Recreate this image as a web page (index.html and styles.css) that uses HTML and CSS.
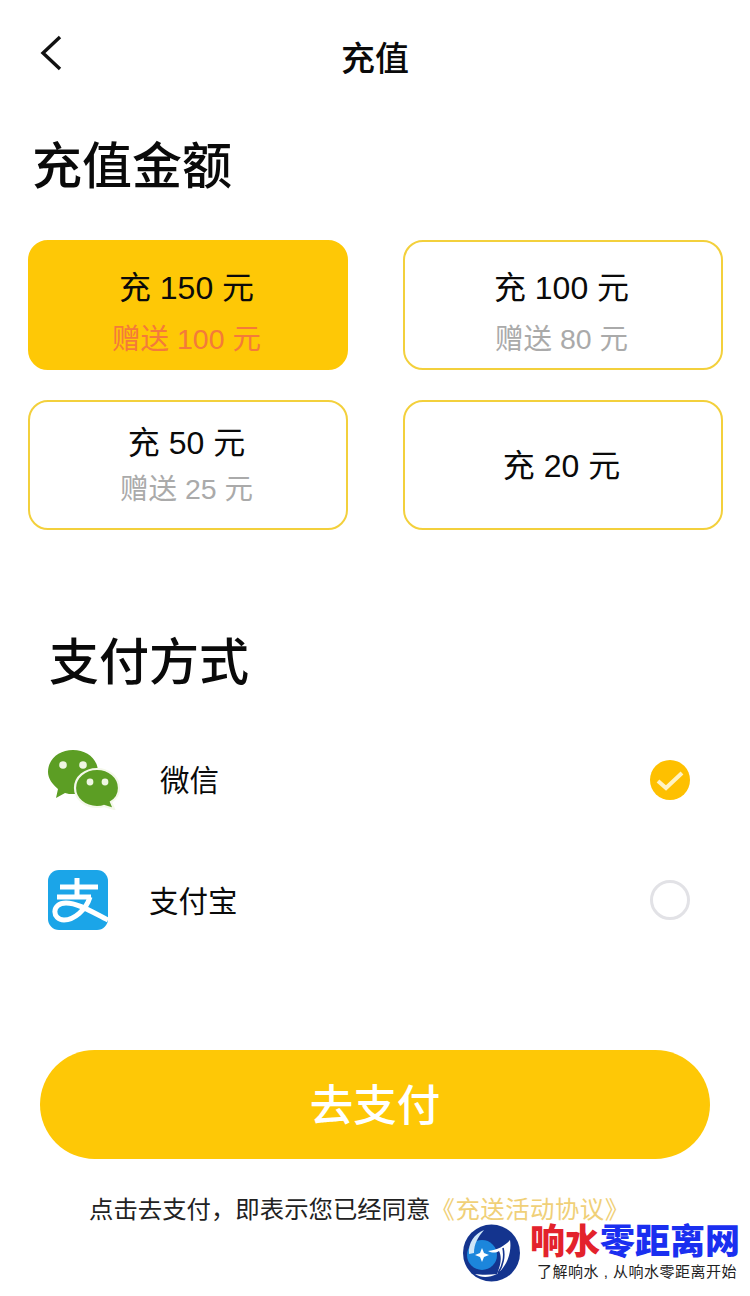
FILE: index.html
```html
<!DOCTYPE html>
<html lang="zh">
<head>
  <meta charset="UTF-8" />
  <meta name="viewport" content="width=device-width, initial-scale=1.0"/>
  <title>充值</title>
  <link rel="stylesheet" href="styles.css">
</head>
<body>
  <div class="page">
    <div class="header">
      <svg class="back" width="28" height="40" viewBox="0 0 28 40">
        <path d="M23 2 L6 18 L23 34" fill="none" stroke="#111" stroke-width="3.4"/>
      </svg>
      <div class="header-title">充值</div>
    </div>

    <div class="section-title amount-title">充值金额</div>
    <div class="amounts">
      <div class="card active tall">
        <div class="card-main">充 150 元</div>
        <div class="card-gift">赠送 100 元</div>
      </div>
      <div class="card tall">
        <div class="card-main">充 100 元</div>
        <div class="card-gift">赠送 80 元</div>
      </div>
      <div class="card tight">
        <div class="card-main">充 50 元</div>
        <div class="card-gift">赠送 25 元</div>
      </div>
      <div class="card single">
        <div class="card-main">充 20 元</div>
      </div>
    </div>

    <div class="section-title pay-title">支付方式</div>
    <div class="pay-row">
      <svg class="pay-icon" width="72" height="60" viewBox="0 0 72 60">
        <path d="M25 0 C39 0 50 9 50 22 C50 34 39 44 25 44 C22 44 20 44 17 43 L8 48 L10 39 C4 34 0 28 0 22 C0 9 11 0 25 0 Z" fill="#5c9e24"/>
        <path d="M49 19 C61 19 71 27 71 38 C71 45 68 49 63 52 L66 59 L56 56 C54 57 51 57 49 57 C37 57 27 49 27 38 C27 27 37 19 49 19 Z" fill="#5c9e24" stroke="#f4f8ea" stroke-width="2.2"/>
        <circle cx="15" cy="15" r="3.8" fill="#eef6e2"/>
        <circle cx="35" cy="15" r="3.8" fill="#eef6e2"/>
        <circle cx="42" cy="32" r="3.4" fill="#eef6e2"/>
        <circle cx="57" cy="32" r="3.4" fill="#eef6e2"/>
      </svg>
      <div class="pay-name wechat">微信</div>
      <div class="radio checked">
        <svg width="40" height="40" viewBox="0 0 40 40">
          <path d="M8 21 L16 28 L32 13" fill="none" stroke="#fff3c4" stroke-width="4"/>
        </svg>
      </div>
    </div>
    <div class="pay-row">
      <svg class="pay-icon" width="60" height="60" viewBox="0 0 60 60">
        <rect width="60" height="60" rx="11" fill="#1ba5e8"/>
        <path d="M12 17 H50 M29 8 V27 M9 27 H43" fill="none" stroke="#fff" stroke-width="5"/>
        <path d="M42 27 C38 40 26 50 16 50 C4 50 3 33 18 33 C30 33 44 42 60 50" fill="none" stroke="#fff" stroke-width="5"/>
      </svg>
      <div class="pay-name alipay">支付宝</div>
      <div class="radio"></div>
    </div>

    <button class="pay-btn">去支付</button>
    <div class="agree">点击去支付，即表示您已经同意<span class="agree-link">《充送活动协议》</span></div>

    <div class="watermark">
      <svg width="60" height="60" viewBox="0 0 60 60">
        <circle cx="30.5" cy="29" r="28.5" fill="#14348e"/>
        <circle cx="21" cy="31" r="15" fill="#1c86dc"/>
        <path d="M8 30 C7 19 13 10 23 6 C17 13 13 20 13 29 Z" fill="#cfe6f8"/>
        <path d="M27 27 C36 26 44 22 49 16 C51 28 46 42 36 50 C40 40 41 33 38 27 C35 29 31 29 27 27 Z" fill="#fff"/>
        <path d="M42 24 C44 32 42 42 37 49" fill="none" stroke="#14348e" stroke-width="1.6"/>
        <path d="M14 50 C20 54 28 54 36 50 C28 51 20 51 14 50 Z" fill="#fff"/>
        <path d="M21 24 L23 29 L28 31 L23 33 L21 38 L19 33 L14 31 L19 29 Z" fill="#fff"/>
      </svg>
      <div class="wm-text">
        <div class="wm-name"><span class="wm-red">响水</span><span class="wm-blue">零距离网</span></div>
        <div class="wm-slogan">了解响水 , 从响水零距离开始</div>
      </div>
    </div>
  </div>
</body>
</html>
```

FILE: styles.css
```css
body {
  font-family: "Liberation Sans", "Noto Sans CJK SC", sans-serif;
  background-color: #ffffff;
  color: #0a0a0a;
  margin: 0;
  padding: 0;
}
.page {
  position: relative;
  width: 750px;
  height: 1296px;
  overflow: hidden;
}
.header {
  position: relative;
  height: 116px;
  text-align: center;
}
.back {
  position: absolute;
  left: 37px;
  top: 35px;
}
.header-title {
  padding-top: 36px;
  font-size: 34px;
  line-height: 46px;
  font-weight: 500;
}
.section-title {
  font-size: 50px;
  line-height: 70px;
  font-weight: 500;
}
.amount-title {
  margin-left: 32px;
  margin-top: 16px;
}
.amounts {
  display: grid;
  grid-template-columns: 320px 320px;
  grid-auto-rows: 130px;
  column-gap: 55px;
  row-gap: 30px;
  margin: 38px 0 0 28px;
}
.card {
  box-sizing: border-box;
  padding-right: 3px;
  border: 2px solid #f3d03c;
  border-radius: 20px;
  display: flex;
  flex-direction: column;
  justify-content: center;
  align-items: center;
}
.card.active {
  background-color: #fec806;
  border-color: #fec806;
}
.card.tall {
  padding-top: 16px;
  gap: 10px;
}
.card.tight {
  padding-top: 1px;
  gap: 5px;
}
.card.single {
  padding-top: 2px;
}
.card-main {
  font-size: 32px;
  line-height: 42px;
}
.card-gift {
  font-size: 28.5px;
  line-height: 40px;
  color: #aaaaaa;
}
.active .card-gift {
  color: #f47a3a;
}
.pay-title {
  margin: 98px 0 0 49px;
}
.pay-row {
  display: flex;
  align-items: center;
  height: 60px;
  margin: 0 60px 0 48px;
}
.pay-title + .pay-row {
  margin-top: 52px;
  margin-bottom: 60px;
}
.pay-name {
  font-size: 29.5px;
  line-height: 40px;
}
.wechat {
  margin-left: 40px;
  padding-top: 2px;
}
.alipay {
  margin-left: 41px;
  padding-top: 4px;
}
.radio {
  box-sizing: border-box;
  width: 40px;
  height: 40px;
  margin-left: auto;
  border-radius: 50%;
  border: 3px solid #e2e2e6;
}
.radio.checked {
  background-color: #fec000;
  border: none;
}
.radio svg {
  display: block;
}
.pay-btn {
  display: block;
  width: 670px;
  height: 109px;
  margin: 120px 0 0 40px;
  padding: 0 0 4px;
  border: none;
  border-radius: 55px;
  background-color: #fec806;
  color: #fff;
  font-family: inherit;
  font-size: 43.5px;
  font-weight: 500;
}
.agree {
  margin: 34px 0 0 89px;
  font-size: 24.4px;
  line-height: 34px;
  color: #222;
  white-space: nowrap;
}
.agree-link {
  color: #f0d078;
  letter-spacing: 0.5px;
}
.watermark {
  position: absolute;
  left: 461px;
  top: 1224px;
  display: flex;
  gap: 9px;
}
.wm-name {
  font-size: 35px;
  line-height: 36px;
  font-weight: 900;
  white-space: nowrap;
}
.wm-red {
  color: #e3222c;
}
.wm-blue {
  color: #1a2ff0;
}
.wm-slogan {
  margin: 2px 0 0 7px;
  font-size: 15px;
  line-height: 20px;
  letter-spacing: 0.5px;
  color: #222;
  white-space: nowrap;
}
```
